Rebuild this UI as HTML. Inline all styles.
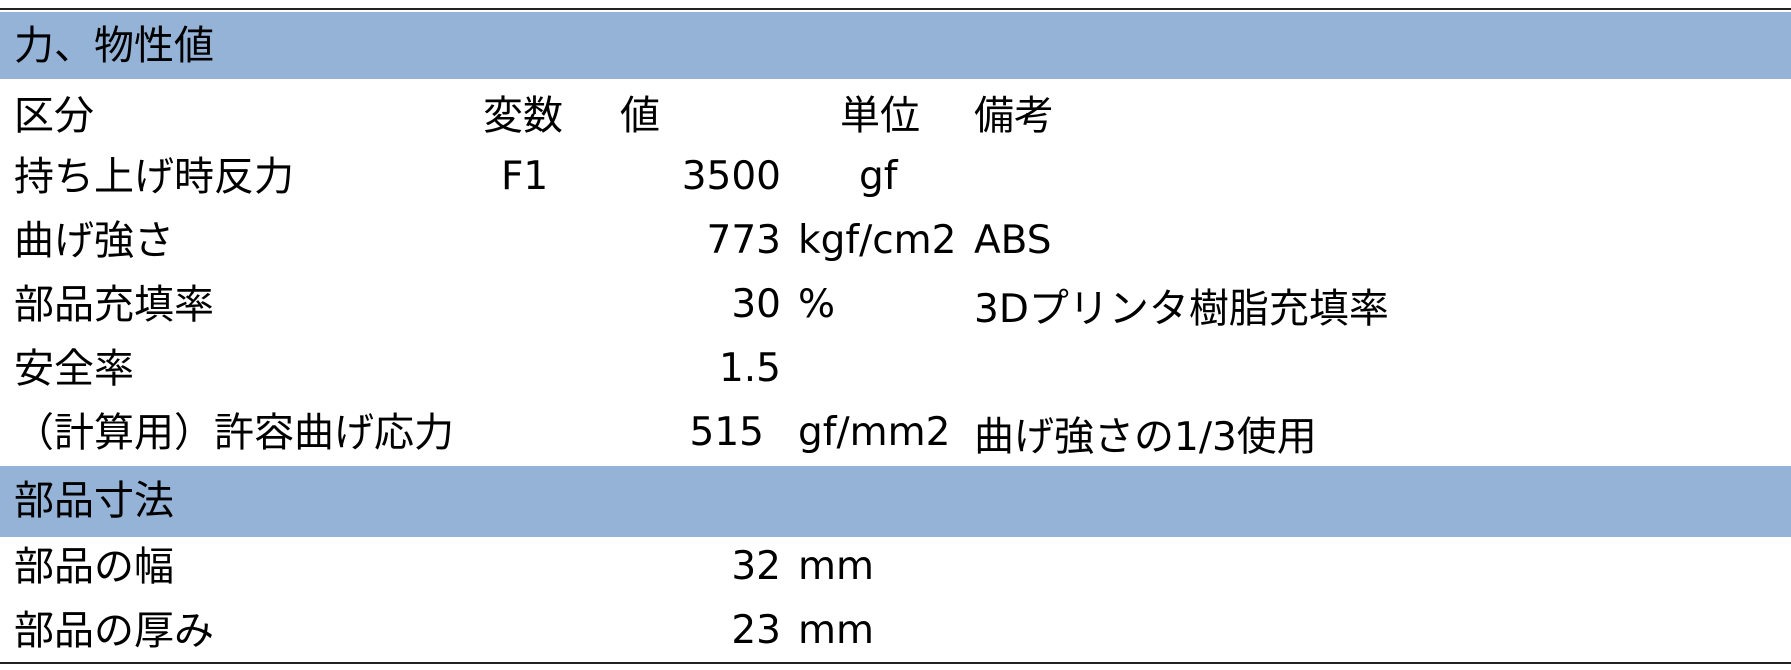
<!DOCTYPE html>
<html><head><meta charset="utf-8"><style>
html,body{margin:0;padding:0;background:#fff;width:1791px;height:670px;overflow:hidden}
body{position:relative;font-family:"DejaVu Sans","Noto Sans CJK JP",sans-serif;font-size:39px;color:#000}
.j{font-family:"Noto Sans CJK JP",sans-serif;font-size:40px;transform:translateY(-4px)}
.k{font-family:"Noto Sans CJK JP",sans-serif;font-size:40px}
.line{position:absolute;left:0;width:1791px;height:2px;background:#222}
.band{position:absolute;left:0;width:1791px;background:#95b3d7}
.t{position:absolute;line-height:64px;height:64px;white-space:nowrap}
.r{text-align:right}
</style></head><body>
<div class="line" style="top:8px"></div>
<div class="band" style="top:12px;height:67px"></div>
<div class="band" style="top:466px;height:71px"></div>
<div class="line" style="top:662px"></div>

<div class="t j" style="left:14px;top:14px">力、物性値</div>

<div class="t j" style="left:14px;top:84px">区分</div>
<div class="t j" style="left:483px;top:84px">変数</div>
<div class="t j" style="left:620px;top:84px">値</div>
<div class="t j" style="left:840px;top:84px">単位</div>
<div class="t j" style="left:974px;top:84px">備考</div>

<div class="t j" style="left:14px;top:145px">持ち上げ時反力</div>
<div class="t" style="left:501px;top:145px">F1</div>
<div class="t r" style="right:1010px;top:145px">3500</div>
<div class="t" style="left:859px;top:145px">gf</div>

<div class="t j" style="left:14px;top:209px">曲げ強さ</div>
<div class="t r" style="right:1010px;top:209px">773</div>
<div class="t" style="left:798px;top:209px">kgf/cm2</div>
<div class="t" style="left:974px;top:209px">ABS</div>

<div class="t j" style="left:14px;top:273px">部品充填率</div>
<div class="t r" style="right:1010px;top:273px">30</div>
<div class="t" style="left:798px;top:273px">%</div>
<div class="t" style="left:974px;top:273px">3D<span class="k">プリンタ樹脂充填率</span></div>

<div class="t j" style="left:14px;top:337px">安全率</div>
<div class="t r" style="right:1010px;top:337px">1.5</div>

<div class="t j" style="left:14px;top:401px">（計算用）許容曲げ応力</div>
<div class="t r" style="right:1027px;top:401px">515</div>
<div class="t" style="left:798px;top:401px">gf/mm2</div>
<div class="t" style="left:974px;top:401px"><span class="k">曲げ強さの</span>1/3<span class="k">使用</span></div>

<div class="t j" style="left:14px;top:469px">部品寸法</div>

<div class="t j" style="left:14px;top:535px">部品の幅</div>
<div class="t r" style="right:1010px;top:535px">32</div>
<div class="t" style="left:798px;top:535px">mm</div>

<div class="t j" style="left:14px;top:599px">部品の厚み</div>
<div class="t r" style="right:1010px;top:599px">23</div>
<div class="t" style="left:798px;top:599px">mm</div>
</body></html>
